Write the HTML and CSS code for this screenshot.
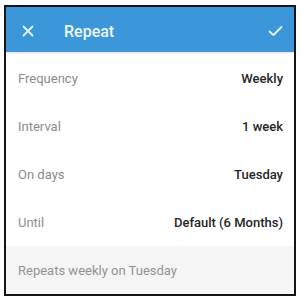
FILE: index.html
```html
<!DOCTYPE html>
<html>
<head>
<meta charset="utf-8">
<link rel="stylesheet" href="styles.css">
</head>
<body>
<div class="frame">
  <header class="bar">
    <svg class="icon close" width="12" height="12" viewBox="0 0 12 12"><path d="M1.5 1.5 L10.5 10.5 M10.5 1.5 L1.5 10.5" stroke="#e9f4fc" stroke-width="1.8" stroke-linecap="round" fill="none"/></svg>
    <span class="title">Repeat</span>
    <svg class="icon check" width="15" height="12" viewBox="0 0 15 12"><path d="M1.5 6.5 L5.5 10 L13.5 2" stroke="#e9f4fc" stroke-width="1.8" stroke-linecap="round" stroke-linejoin="round" fill="none"/></svg>
  </header>
  <div class="list">
    <div class="row"><span class="label">Frequency</span><span class="value">Weekly</span></div>
    <div class="row"><span class="label">Interval</span><span class="value">1 week</span></div>
    <div class="row"><span class="label">On days</span><span class="value">Tuesday</span></div>
    <div class="row"><span class="label">Until</span><span class="value">Default (6 Months)</span></div>
  </div>
  <div class="summary">Repeats weekly on Tuesday</div>
</div>
</body>
</html>
```

FILE: styles.css
```css
html, body {
  margin: 0;
  padding: 0;
  background: #ffffff;
}
body {
  font-family: Roboto, "Liberation Sans", Arial, sans-serif;
}
.frame {
  margin: 5px 0 0 4px;
  width: 292px;
  height: 291px;
  box-sizing: border-box;
  border: 2px solid #151515;
  display: flex;
  flex-direction: column;
  background: #ffffff;
  overflow: hidden;
}
.bar {
  height: 45px;
  box-sizing: border-box;
  flex: none;
  background: #3b96da;
  display: flex;
  align-items: center;
  padding: 3px 11px 0 16px;
  box-shadow: 0 1px 2px rgba(0, 0, 0, 0.12);
  position: relative;
  z-index: 1;
}
.close {
  flex: none;
}
.title {
  color: #eef7fd;
  font-size: 16px;
  font-weight: 500;
  margin-left: 30px;
  flex: 1;
}
.check {
  flex: none;
}
.list {
  padding-top: 2px;
  flex: none;
}
.row {
  height: 48px;
  display: flex;
  align-items: center;
  justify-content: space-between;
  padding: 0 11px 0 12px;
  font-size: 13px;
}
.label {
  color: #8c8c8c;
}
.value {
  color: #262626;
  font-weight: 500;
}
.summary {
  flex: 1;
  background: #f5f5f5;
  display: flex;
  align-items: center;
  padding: 0 12px;
  font-size: 13px;
  color: #939393;
}
```
